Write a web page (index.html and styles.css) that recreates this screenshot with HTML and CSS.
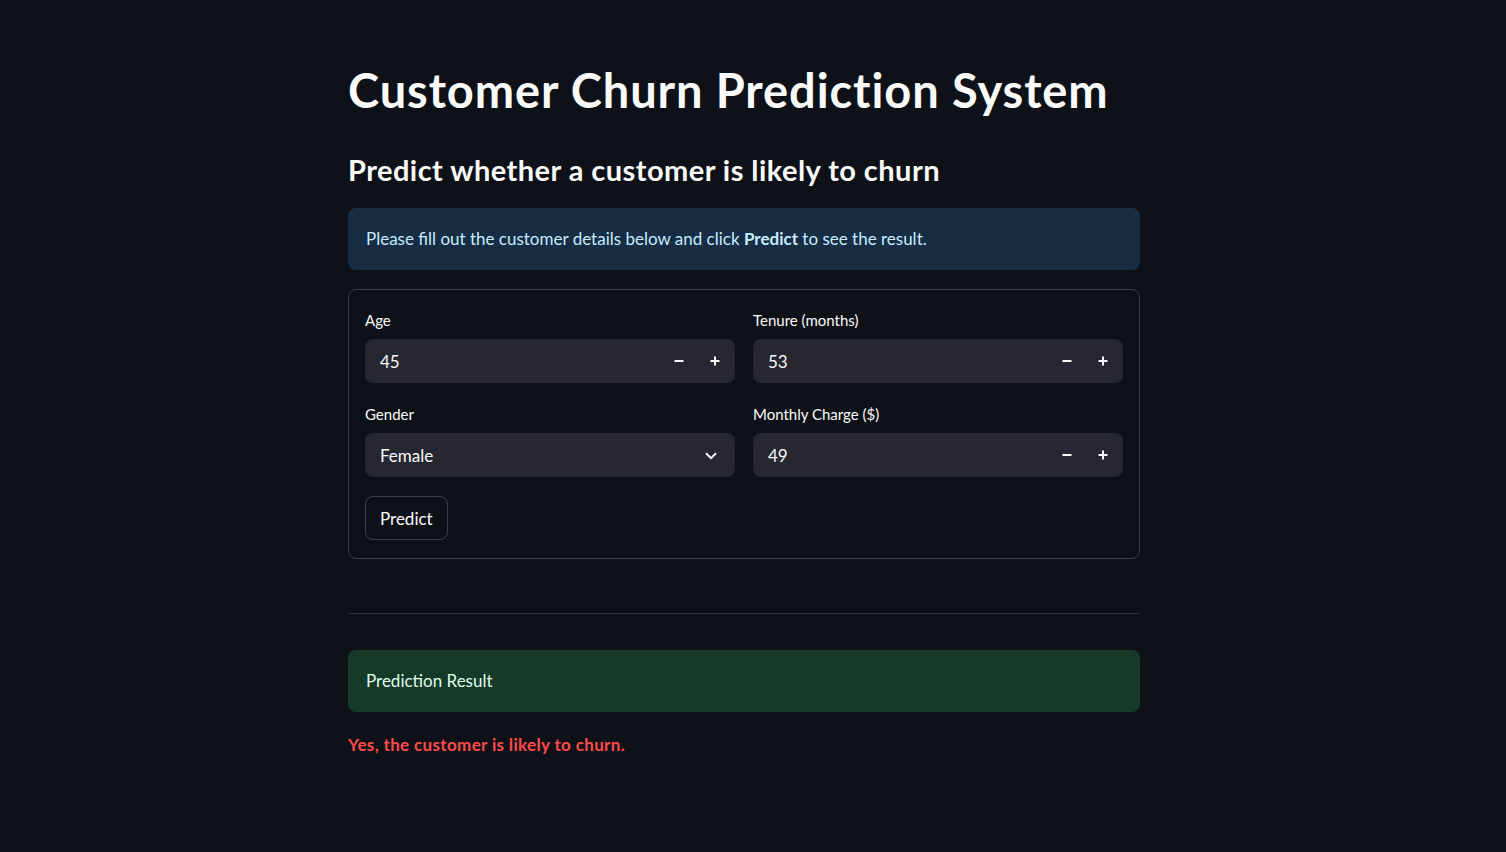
FILE: index.html
```html
<!DOCTYPE html>
<html lang="en">
<head>
<meta charset="utf-8">
<title>Customer Churn Prediction System</title>
<link rel="stylesheet" href="styles.css">
</head>
<body>
<main class="page">
  <h1 class="title">Customer Churn Prediction System</h1>
  <h3 class="subtitle">Predict whether a customer is likely to churn</h3>
  <div class="alert alert-info">Please fill out the customer details below and click <strong>Predict</strong> to see the result.</div>

  <form class="form">
    <div class="grid">
      <div class="field">
        <label class="label">Age</label>
        <div class="control">
          <span class="value">45</span>
          <span class="step"><svg width="10" height="10" viewBox="0 0 10 10"><path d="M0.5 5h9" stroke="#fafafa" stroke-width="2"/></svg></span>
          <span class="step"><svg width="10" height="10" viewBox="0 0 10 10"><path d="M0.5 5h9M5 0.5v9" stroke="#fafafa" stroke-width="2"/></svg></span>
        </div>
      </div>
      <div class="field">
        <label class="label">Tenure (months)</label>
        <div class="control">
          <span class="value">53</span>
          <span class="step"><svg width="10" height="10" viewBox="0 0 10 10"><path d="M0.5 5h9" stroke="#fafafa" stroke-width="2"/></svg></span>
          <span class="step"><svg width="10" height="10" viewBox="0 0 10 10"><path d="M0.5 5h9M5 0.5v9" stroke="#fafafa" stroke-width="2"/></svg></span>
        </div>
      </div>
      <div class="field">
        <label class="label">Gender</label>
        <div class="control select">
          <span class="value">Female</span>
          <span class="chevron"><svg width="12" height="8" viewBox="0 0 12 8"><path d="M1 1.2l5 5 5-5" fill="none" stroke="#fafafa" stroke-width="2"/></svg></span>
        </div>
      </div>
      <div class="field">
        <label class="label">Monthly Charge ($)</label>
        <div class="control">
          <span class="value">49</span>
          <span class="step"><svg width="10" height="10" viewBox="0 0 10 10"><path d="M0.5 5h9" stroke="#fafafa" stroke-width="2"/></svg></span>
          <span class="step"><svg width="10" height="10" viewBox="0 0 10 10"><path d="M0.5 5h9M5 0.5v9" stroke="#fafafa" stroke-width="2"/></svg></span>
        </div>
      </div>
    </div>
    <button type="button" class="btn">Predict</button>
  </form>

  <hr class="divider">

  <div class="alert alert-success">Prediction Result</div>
  <p class="result">Yes, the customer is likely to churn.</p>
</main>
</body>
</html>
```

FILE: styles.css
```css
* { box-sizing: border-box; }

html, body {
  margin: 0;
  padding: 0;
  background: #0e1117;
  color: #fafafa;
  font-family: Lato, "Noto Sans", sans-serif;
}

body {
  padding-right: 18px;
}

.page {
  width: 792px;
  margin: 0 auto;
  padding-top: 62px;
  display: flex;
  flex-direction: column;
}

.title {
  margin: 0;
  font-size: 47px;
  line-height: 56px;
  font-weight: 700;
  letter-spacing: 0.9px;
}

.subtitle {
  margin: 34px 0 0;
  font-size: 29px;
  line-height: 36px;
  font-weight: 700;
  letter-spacing: 0.45px;
}

.alert {
  height: 62px;
  border-radius: 8px;
  padding: 17px 18px;
  font-size: 17px;
  line-height: 28px;
}

.alert-info {
  margin-top: 20px;
  background: #172d43;
  color: #c7ebff;
}

.alert-info strong { font-weight: 700; }

.alert-success {
  margin-top: 36px;
  background: #173928;
  color: #dffde9;
}

.form {
  margin-top: 19px;
  border: 1px solid rgba(250, 250, 250, 0.2);
  border-radius: 8px;
  padding: 18px 16px 18px;
  display: flex;
  flex-direction: column;
  align-items: flex-start;
}

.grid {
  width: 100%;
  display: grid;
  grid-template-columns: 1fr 1fr;
  column-gap: 18px;
  row-gap: 19px;
}

.field {
  display: flex;
  flex-direction: column;
  gap: 7px;
}

.label {
  font-size: 15px;
  line-height: 24px;
  color: #fafafa;
}

.control {
  height: 44px;
  background: #262730;
  border-radius: 8px;
  display: flex;
  align-items: center;
  padding: 0 2px 0 15px;
}

.value {
  flex: 1;
  font-size: 17px;
}

.step {
  width: 36px;
  height: 44px;
  display: flex;
  align-items: center;
  justify-content: center;
}

.step svg { display: block; }

.select { padding-right: 18px; }

.chevron {
  display: flex;
  align-items: center;
  padding-top: 1px;
}

.btn {
  margin-top: 19px;
  height: 44px;
  padding: 0 14px;
  background: transparent;
  color: #fafafa;
  border: 1px solid rgba(250, 250, 250, 0.2);
  border-radius: 8px;
  font-family: inherit;
  font-size: 17px;
}

.divider {
  margin: 54px 0 0;
  border: 0;
  border-top: 1px solid #303238;
  height: 0;
}

.result {
  margin: 21px 0 0;
  font-size: 17px;
  line-height: 24px;
  font-weight: 700;
  letter-spacing: 0.35px;
  color: #ff4b4b;
}
```
